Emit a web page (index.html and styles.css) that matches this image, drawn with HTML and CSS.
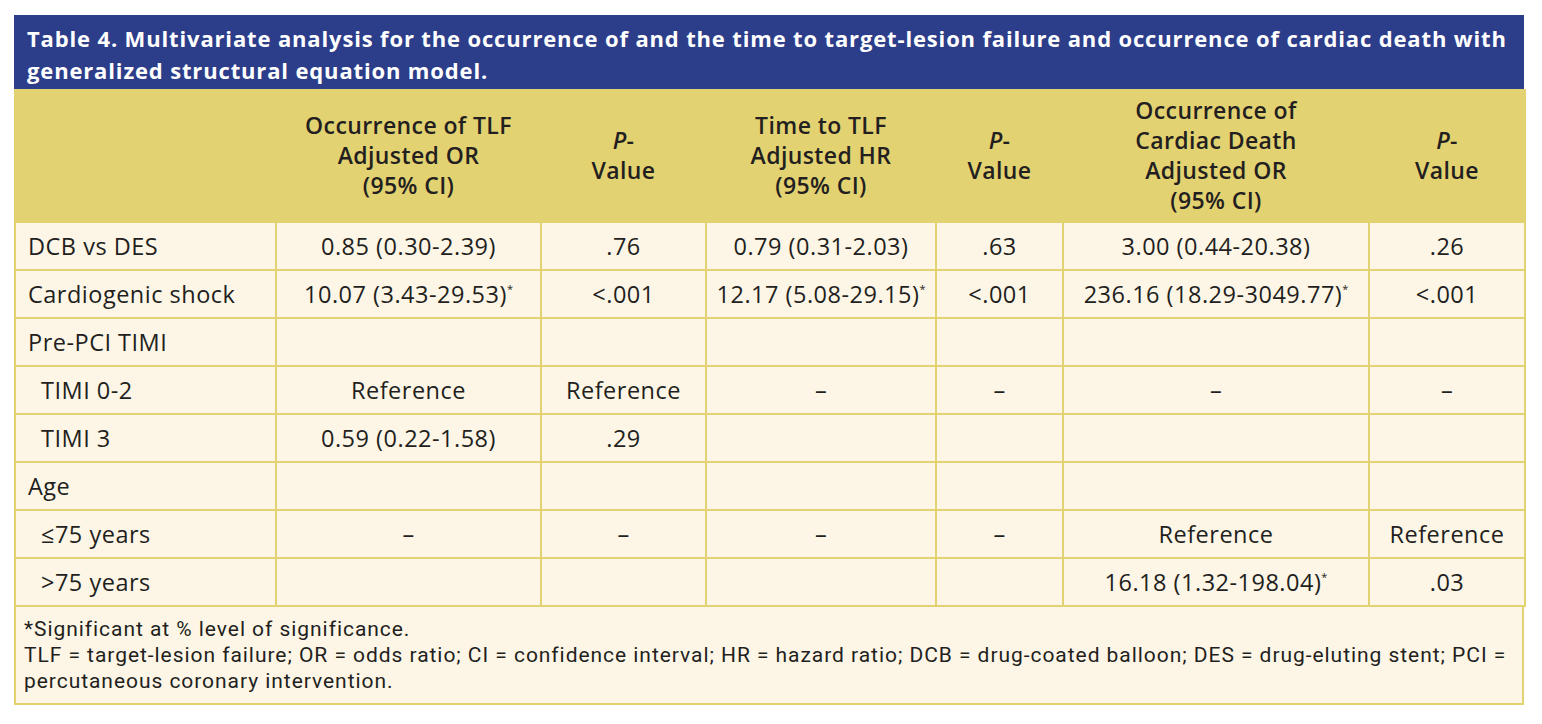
FILE: index.html
```html
<!DOCTYPE html>
<html>
<head>
<meta charset="utf-8">
<link rel="stylesheet" href="styles.css">
</head>
<body>
<div class="wrap">
  <div class="title">Table 4. Multivariate analysis for the occurrence of and the time to target-lesion failure and occurrence of cardiac death with<br>generalized structural equation model.</div>
  <table class="tbl">
    <colgroup>
      <col class="c1"><col class="c2"><col class="c3"><col class="c4"><col class="c5"><col class="c6"><col class="c7">
    </colgroup>
    <thead>
      <tr>
        <th></th>
        <th>Occurrence of TLF<br>Adjusted OR<br>(95% CI)</th>
        <th><i>P</i>-<br>Value</th>
        <th>Time to TLF<br>Adjusted HR<br>(95% CI)</th>
        <th><i>P</i>-<br>Value</th>
        <th>Occurrence of<br>Cardiac Death<br>Adjusted OR<br>(95% CI)</th>
        <th><i>P</i>-<br>Value</th>
      </tr>
    </thead>
    <tbody>
      <tr><td class="lbl">DCB vs DES</td><td>0.85 (0.30-2.39)</td><td>.76</td><td>0.79 (0.31-2.03)</td><td>.63</td><td>3.00 (0.44-20.38)</td><td>.26</td></tr>
      <tr><td class="lbl">Cardiogenic shock</td><td>10.07 (3.43-29.53)<sup>*</sup></td><td>&lt;.001</td><td>12.17 (5.08-29.15)<sup>*</sup></td><td>&lt;.001</td><td>236.16 (18.29-3049.77)<sup>*</sup></td><td>&lt;.001</td></tr>
      <tr><td class="lbl">Pre-PCI TIMI</td><td></td><td></td><td></td><td></td><td></td><td></td></tr>
      <tr><td class="lbl sub">TIMI 0-2</td><td>Reference</td><td>Reference</td><td>–</td><td>–</td><td>–</td><td>–</td></tr>
      <tr><td class="lbl sub">TIMI 3</td><td>0.59 (0.22-1.58)</td><td>.29</td><td></td><td></td><td></td><td></td></tr>
      <tr><td class="lbl">Age</td><td></td><td></td><td></td><td></td><td></td><td></td></tr>
      <tr><td class="lbl sub">≤75 years</td><td>–</td><td>–</td><td>–</td><td>–</td><td>Reference</td><td>Reference</td></tr>
      <tr><td class="lbl sub">&gt;75 years</td><td></td><td></td><td></td><td></td><td>16.18 (1.32-198.04)<sup>*</sup></td><td>.03</td></tr>
    </tbody>
  </table>
  <div class="foot">*Significant at % level of significance.<br>TLF = target-lesion failure; OR = odds ratio; CI = confidence interval; HR = hazard ratio; DCB = drug-coated balloon; DES = drug-eluting stent; PCI =<br>percutaneous coronary intervention.</div>
</div>
</body>
</html>
```
FILE: styles.css
```css
html, body { margin: 0; padding: 0; background: #ffffff; }
body { font-family: "Open Sans", sans-serif; color: #231f20; }
.wrap { margin: 15px 0 0 14px; width: 1510px; }
.title {
  background: #2c3d8a;
  color: #ffffff;
  font-weight: 700;
  font-size: 22px;
  letter-spacing: 0.85px;
  line-height: 32px;
  padding: 7px 8px 3px 13px;
  height: 64px;
  white-space: nowrap;
}
.tbl {
  width: 1510px;
  border-collapse: collapse;
  table-layout: fixed;
  font-size: 23.5px;
  letter-spacing: 0.5px;
}
.c1 { width: 261px; } .c2 { width: 265px; } .c3 { width: 165px; } .c4 { width: 230px; }
.c5 { width: 127px; } .c6 { width: 306px; } .c7 { width: 156px; }
.tbl th {
  background: #e3d271;
  font-weight: 600;
  font-size: 23px;
  letter-spacing: 0.4px;
  line-height: 30px;
  height: 132px;
  padding: 0 2px;
  text-align: center;
  vertical-align: middle;
  border-left: 2px solid #e3d271;
  border-right: 2px solid #e3d271;
}
.tbl td {
  background: #fdf6e7;
  border: 2px solid #e3d271;
  height: 46px;
  padding: 0 4px;
  text-align: center;
  vertical-align: middle;
  white-space: nowrap;
}
.tbl td.lbl { text-align: left; padding-left: 12px; }
.tbl td.sub { padding-left: 25px; }
sup { font-size: 11px; vertical-align: 10px; line-height: 0; letter-spacing: 0; }
.foot {
  background: #fdf6e7;
  border: 2px solid #e3d271;
  border-top: none;
  font-family: "Roboto", sans-serif;
  font-size: 21px;
  letter-spacing: 0.95px;
  line-height: 26px;
  padding: 9px 10px 9px 8px;
  height: 78px;
  white-space: nowrap;
}
```
